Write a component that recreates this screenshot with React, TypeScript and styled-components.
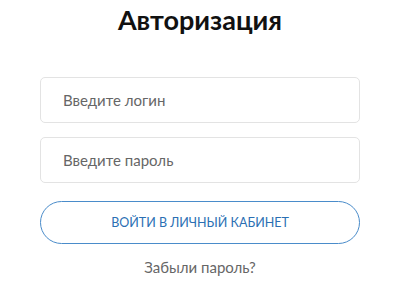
import styled, { createGlobalStyle } from 'styled-components';

const GlobalStyle = createGlobalStyle`
  html, body {
    margin: 0;
    padding: 0;
    background: #ffffff;
  }
  body {
    font-family: Lato, "Noto Sans", sans-serif;
  }
`;

const Page = styled.div`
  width: 400px;
  height: 284px;
  display: flex;
  flex-direction: column;
  align-items: center;
  padding-top: 3px;
  box-sizing: border-box;
`;

const Title = styled.h1`
  margin: 0;
  font-family: Lato, "Noto Sans", sans-serif;
  font-weight: 700;
  font-size: 27px;
  line-height: 34px;
  color: #111111;
`;

const Form = styled.form`
  display: flex;
  flex-direction: column;
  align-items: center;
  width: 320px;
  margin-top: 40px;
  gap: 14px;
`;

const Field = styled.input`
  width: 100%;
  height: 46px;
  box-sizing: border-box;
  padding: 0 22px;
  border: 1px solid #e3e3e3;
  border-radius: 5px;
  background: #ffffff;
  font-family: Lato, "Noto Sans", sans-serif;
  font-size: 15px;
  color: #333333;
  outline: none;
  &::placeholder {
    color: #666666;
  }
`;

const SubmitButton = styled.button`
  width: 100%;
  height: 43px;
  margin-top: 4px;
  box-sizing: border-box;
  border: 1px solid #4a8cca;
  border-radius: 22px;
  background: #ffffff;
  color: #2b6fb3;
  font-family: Lato, "Noto Sans", sans-serif;
  font-size: 12.5px;
  text-transform: uppercase;
  cursor: pointer;
`;

const ForgotLink = styled.a`
  margin-top: 0;
  font-family: Lato, "Noto Sans", sans-serif;
  font-size: 15px;
  line-height: 18px;
  color: #666666;
  text-decoration: none;
  cursor: pointer;
`;

export default function App(): JSX.Element {
  return (
    <>
      <GlobalStyle />
      <Page>
        <Title>Авторизация</Title>
        <Form action="">
          <Field type="text" placeholder="Введите логин" />
          <Field type="password" placeholder="Введите пароль" />
          <SubmitButton type="submit">Войти в личный кабинет</SubmitButton>
          <ForgotLink>Забыли пароль?</ForgotLink>
        </Form>
      </Page>
    </>
  );
}
